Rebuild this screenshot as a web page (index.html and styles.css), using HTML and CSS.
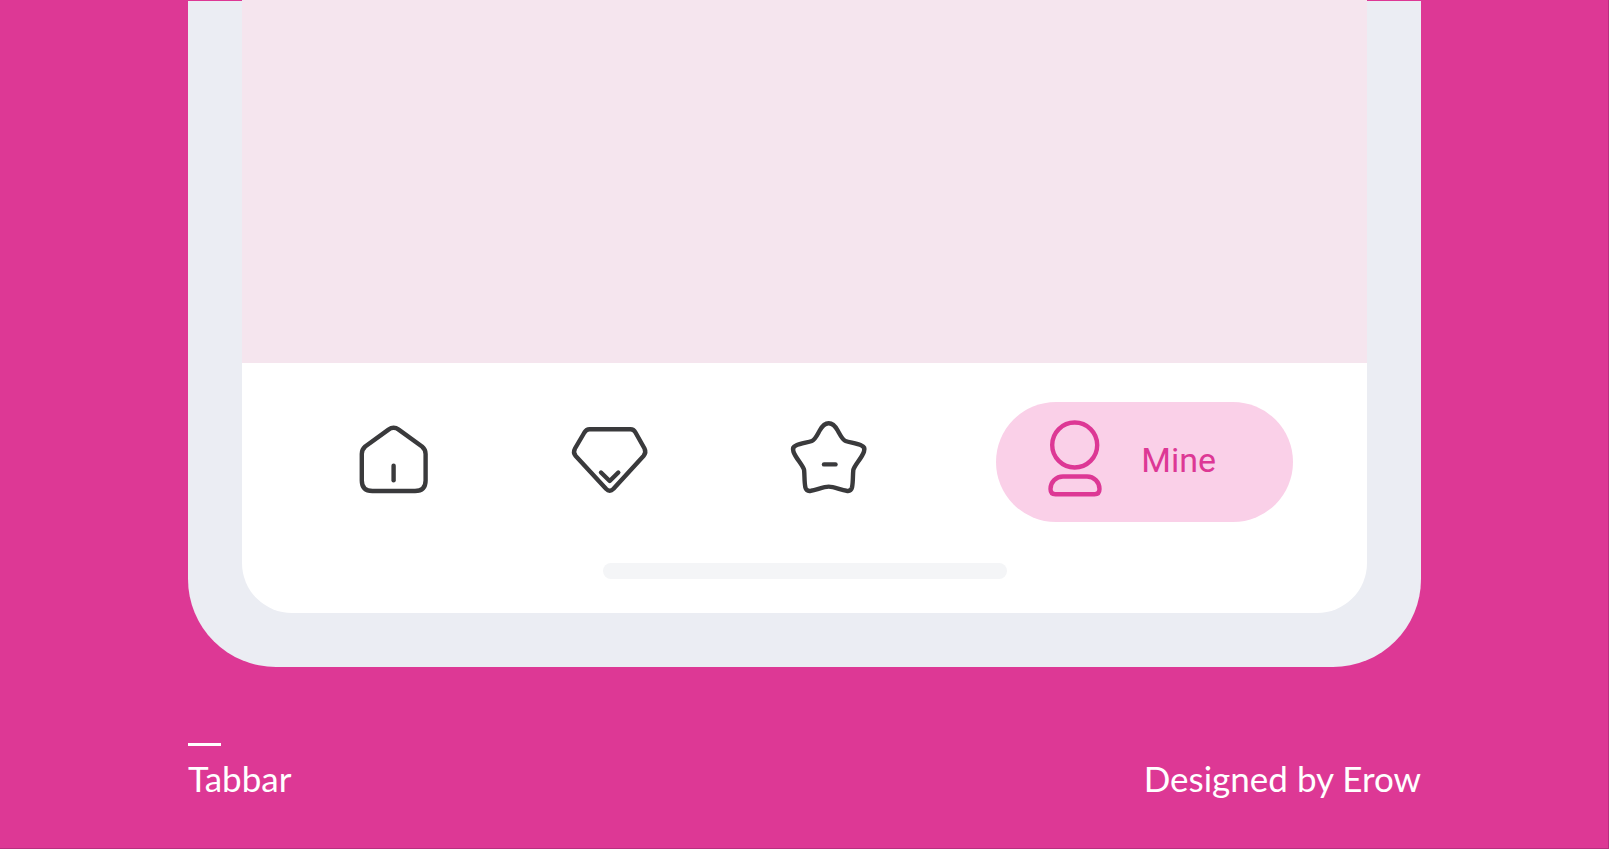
FILE: index.html
```html
<!DOCTYPE html>
<html lang="en">
<head>
    <meta charset="UTF-8">
    <meta name="viewport" content="width=device-width, initial-scale=1">
    <title>Tabbar</title>
    <link rel="stylesheet" href="styles.css">
</head>

<body>
    <main class="phone">
        <div class="screen">
            <div class="content"></div>
            <div class="bottom">
                <nav class="tabbar">
                    <button type="button" class="tab" aria-label="Home">
                        <svg viewBox="5 8 98 98">
                            <path d="M48.5 24.6 Q53.6 21 58.7 24.6 L82 41.5 Q85.6 44.5 85.6 49 V75.5 Q85.6 86 75 86 H32.4 Q21.8 86 21.8 75.5 V49 Q21.8 44.5 25.2 41.5 Z"/>
                            <path d="M53.6 60.7 V75.3"/>
                        </svg>
                    </button>
                    <button type="button" class="tab" aria-label="Discover">
                        <svg viewBox="7 8 98 98">
                            <path d="M34.5 24.3 H75.5 Q78.7 24.3 80.5 27.5 L89.5 43.5 Q91.5 47.5 88.5 51 L58.5 83.8 Q54.7 87.6 51 83.8 L20.7 51 Q17.7 47.5 20 43.5 L29.4 27.5 Q31.4 24.3 34.5 24.3 Z"/>
                            <path d="M46 67.5 L54.7 76 L63.3 67.5"/>
                        </svg>
                    </button>
                    <button type="button" class="tab" aria-label="Favorites">
                        <svg viewBox="8 8 98 98">
                            <path d="M57.7 18.2 C61.5 18.2 64.5 21.5 66.7 25.5 C69 29.5 71.5 35 74.5 36 C79 37.5 86 38.5 90.5 40.5 Q94.5 42 93 46.5 C91 53 83.5 60 82.3 65 C81.7 71 82.2 77 81 82.5 Q80 86.6 75.5 85.8 C70 85 63 81.6 57.7 81.6 C52.4 81.6 45.4 85 39.9 85.8 Q35.4 86.6 34.4 82.5 C33.2 77 33.7 71 33.1 65 C31.9 60 24.4 53 22.4 46.5 Q20.9 42 24.9 40.5 C29.4 38.5 36.4 37.5 40.9 36 C43.9 35 46.4 29.5 48.7 25.5 C50.9 21.5 53.9 18.2 57.7 18.2 Z"/>
                            <path d="M53 59.4 H64.5"/>
                        </svg>
                    </button>
                    <button type="button" class="tab active">
                        <svg viewBox="64 30 60 84">
                            <circle cx="93.7" cy="55" r="22.5"/>
                            <path d="M82 86.5 H106 C113 86.5 118.5 92 118.5 99 Q118.5 104.2 113.5 104.2 H74.5 Q69.5 104.2 69.5 99 C69.5 92 75 86.5 82 86.5 Z"/>
                        </svg>
                        <span>Mine</span>
                    </button>
                </nav>
                <div class="home-indicator"></div>
            </div>
        </div>
    </main>

    <footer class="footer">
        <div class="title">Tabbar</div>
        <div class="author">Designed by Erow</div>
    </footer>
</body>
</html>
```

FILE: styles.css
```css
* {
    box-sizing: border-box;
}
body {
    font-family: Lato, sans-serif;
    background-color: #dd3895;
    margin: 0;
    min-height: 100vh;
    display: flex;
    flex-direction: column;
    border-right: 1px solid #b82f7f;
    border-bottom: 1px solid #b82f7f;
}
.phone {
    flex: 1;
    display: flex;
    margin: 1px 187px 0 188px;
    padding: 0 54px 54px;
    background-color: #ebedf3;
    border-radius: 0 0 88px 88px;
}
.screen {
    flex: 1;
    display: flex;
    flex-direction: column;
    margin-top: -1px;
    background-color: #ffffff;
    border-radius: 0 0 50px 50px;
}
.content {
    flex: 1;
    background-color: #f5e5ee;
}
.bottom {
    padding: 39px 0 34px;
}
.tabbar {
    display: flex;
    justify-content: space-between;
    align-items: center;
    padding: 0 74px 0 103px;
}
.tab {
    display: flex;
    align-items: center;
    padding: 0;
    border: none;
    background: none;
    color: #3a3a3c;
    cursor: pointer;
}
.tab svg {
    display: block;
    width: 98px;
    height: 98px;
    fill: none;
    stroke: currentColor;
    stroke-width: 4.4;
    stroke-linecap: round;
    stroke-linejoin: round;
}
.tab.active {
    gap: 36px;
    height: 120px;
    padding: 0 77px 0 49px;
    border-radius: 60px;
    background-color: #fad0e8;
    color: #dd3895;
    font-family: Roboto, sans-serif;
    font-size: 34px;
}
.tab.active svg {
    width: 60px;
    height: 84px;
}
.tab.active span {
    padding-bottom: 4px;
}
.home-indicator {
    width: 404px;
    height: 16px;
    margin: 41px auto 0;
    border-radius: 8px;
    background-color: #f4f5f7;
}
.footer {
    display: flex;
    justify-content: space-between;
    align-items: flex-end;
    padding: 76px 187px 50px 188px;
    color: #ffffff;
    font-size: 35px;
    line-height: 40px;
}
.title::before {
    content: "";
    display: block;
    width: 33px;
    height: 3px;
    margin-bottom: 12px;
    background-color: #ffffff;
}
```
